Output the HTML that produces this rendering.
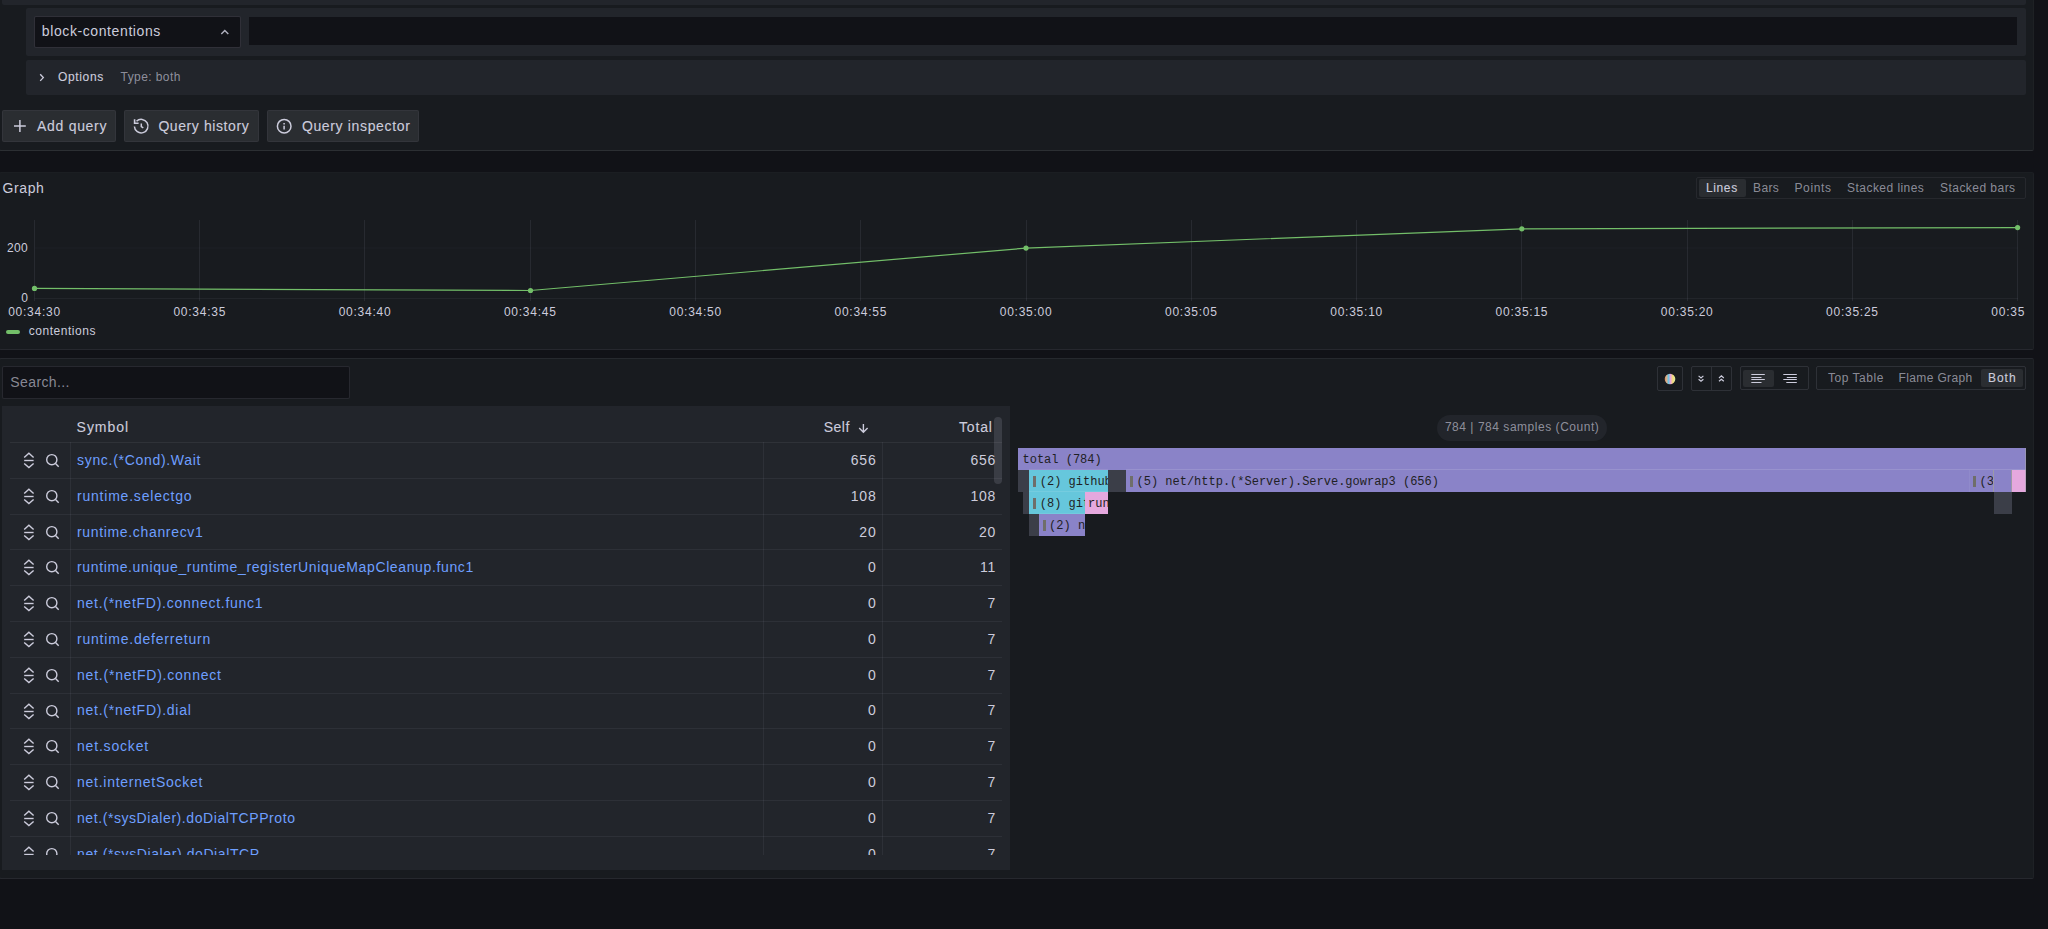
<!DOCTYPE html>
<html><head><meta charset="utf-8"><style>
html,body{margin:0;padding:0}
body{width:2048px;height:929px;overflow:hidden;background:#111217;position:relative;font-family:"Liberation Sans",sans-serif}
.b,.t,.m{position:absolute;box-sizing:border-box}
.t{white-space:nowrap}
.m{white-space:pre;font-family:"Liberation Mono",monospace;font-size:12px;line-height:14px;color:#1f1f24}
</style></head><body>
<div class="b" style="left:-1px;top:-10px;width:2035px;height:161px;background:#181b1f;border:1px solid rgba(204,204,220,0.08);border-radius:2px;border-right-color:rgba(204,204,220,0.035);border-bottom-color:rgba(204,204,220,0.11);"></div><div class="b" style="left:2px;top:-30px;width:2024px;height:34.5px;background:#22252b;border-radius:2px;"></div><div class="b" style="left:26px;top:8px;width:2000px;height:48px;background:#22252b;border-radius:2px;"></div><div class="b" style="left:34px;top:16px;width:207px;height:32px;background:#111217;border:1px solid rgba(204,204,220,0.17);border-radius:2px;"></div><div class="t" style="left:41.80px;top:24.35px;font-size:14px;line-height:14px;color:#ccccdc;letter-spacing:0.6px;">block-contentions</div><svg class="b" style="left:218px;top:26px" width="14" height="12"><polyline points="3.3,8 6.8,4.4 10.3,8" fill="none" stroke="rgba(204,204,220,0.85)" stroke-width="1.4"/></svg><div class="b" style="left:249px;top:16.5px;width:1768px;height:28.7px;background:#111217;"></div><div class="b" style="left:26px;top:60px;width:2000px;height:35px;background:#22252b;border-radius:2px;"></div><svg class="b" style="left:36px;top:70px" width="12" height="16"><polyline points="4.2,4.3 7.3,7.6 4.2,10.9" fill="none" stroke="#ccccdc" stroke-width="1.35"/></svg><div class="t" style="left:58.10px;top:70.64px;font-size:12px;line-height:12px;color:#ccccdc;letter-spacing:0.62px;-webkit-text-stroke:0.12px currentColor;">Options</div><div class="t" style="left:120.60px;top:70.64px;font-size:12px;line-height:12px;color:rgba(204,204,220,0.65);letter-spacing:0.41px;">Type: both</div><div class="b" style="left:2px;top:110px;width:114px;height:32px;background:rgba(204,204,220,0.10);border:1px solid rgba(204,204,220,0.06);border-radius:2px;"></div><div class="b" style="left:124px;top:110px;width:135px;height:32px;background:rgba(204,204,220,0.10);border:1px solid rgba(204,204,220,0.06);border-radius:2px;"></div><div class="b" style="left:267px;top:110px;width:152px;height:32px;background:rgba(204,204,220,0.10);border:1px solid rgba(204,204,220,0.06);border-radius:2px;"></div><svg class="b" style="left:10px;top:116px" width="20" height="20"><path d="M4 10 H15.8 M9.9 4.1 V15.9" stroke="#ccccdc" stroke-width="1.5" fill="none"/></svg><div class="t" style="left:37.10px;top:119.05px;font-size:14px;line-height:14px;color:#ccccdc;letter-spacing:0.69px;-webkit-text-stroke:0.12px currentColor;">Add query</div><svg class="b" style="left:131px;top:116px" width="20" height="20"><path d="M3.4 10.5 A6.8 6.8 0 1 0 5.5 5.2" stroke="#ccccdc" stroke-width="1.5" fill="none"/><polyline points="3.6,3.3 3.6,7.2 7.6,7.2" stroke="#ccccdc" stroke-width="1.6" fill="none"/><polyline points="10.3,7.6 10.3,10.6 12.3,11.8" stroke="#ccccdc" stroke-width="1.5" fill="none"/></svg><div class="t" style="left:158.40px;top:119.05px;font-size:14px;line-height:14px;color:#ccccdc;letter-spacing:0.59px;-webkit-text-stroke:0.12px currentColor;">Query history</div><svg class="b" style="left:274px;top:116px" width="20" height="20"><circle cx="10.2" cy="10.2" r="6.8" stroke="#ccccdc" stroke-width="1.5" fill="none"/><path d="M10.1 6.9 V8.4 M10.1 9.8 V13.6" stroke="#ccccdc" stroke-width="1.5" fill="none"/></svg><div class="t" style="left:301.90px;top:119.05px;font-size:14px;line-height:14px;color:#ccccdc;letter-spacing:0.65px;-webkit-text-stroke:0.12px currentColor;">Query inspector</div><div class="b" style="left:-1px;top:172px;width:2035px;height:178px;background:#181b1f;border:1px solid rgba(204,204,220,0.08);border-radius:2px;border-right-color:rgba(204,204,220,0.035);border-top-color:rgba(204,204,220,0.02);"></div><div class="t" style="left:2.60px;top:180.55px;font-size:14px;line-height:14px;color:#ccccdc;letter-spacing:0.6px;">Graph</div><div class="b" style="left:1696px;top:177px;width:330px;height:22px;border:1px solid rgba(204,204,220,0.08);border-radius:2px;"></div><div class="b" style="left:1699px;top:179px;width:47px;height:18px;background:rgba(204,204,220,0.10);border-radius:2px;"></div><div class="t" style="left:1706.00px;top:181.74px;font-size:12px;line-height:12px;color:#ccccdc;letter-spacing:0.62px;-webkit-text-stroke:0.12px currentColor;">Lines</div><div class="t" style="left:1753.00px;top:181.74px;font-size:12px;line-height:12px;color:rgba(204,204,220,0.65);letter-spacing:0.4px;">Bars</div><div class="t" style="left:1794.50px;top:181.74px;font-size:12px;line-height:12px;color:rgba(204,204,220,0.65);letter-spacing:0.62px;">Points</div><div class="t" style="left:1847.10px;top:181.74px;font-size:12px;line-height:12px;color:rgba(204,204,220,0.65);letter-spacing:0.45px;">Stacked lines</div><div class="t" style="left:1940.00px;top:181.74px;font-size:12px;line-height:12px;color:rgba(204,204,220,0.65);letter-spacing:0.46px;">Stacked bars</div><svg class="b" style="left:0;top:0" width="2048" height="929"><line x1="34.50" y1="220" x2="34.50" y2="301" stroke="rgba(204,204,220,0.09)" stroke-width="1"/><line x1="199.50" y1="220" x2="199.50" y2="301" stroke="rgba(204,204,220,0.09)" stroke-width="1"/><line x1="364.50" y1="220" x2="364.50" y2="301" stroke="rgba(204,204,220,0.09)" stroke-width="1"/><line x1="530.50" y1="220" x2="530.50" y2="301" stroke="rgba(204,204,220,0.09)" stroke-width="1"/><line x1="695.50" y1="220" x2="695.50" y2="301" stroke="rgba(204,204,220,0.09)" stroke-width="1"/><line x1="860.50" y1="220" x2="860.50" y2="301" stroke="rgba(204,204,220,0.09)" stroke-width="1"/><line x1="1026.50" y1="220" x2="1026.50" y2="301" stroke="rgba(204,204,220,0.09)" stroke-width="1"/><line x1="1191.50" y1="220" x2="1191.50" y2="301" stroke="rgba(204,204,220,0.09)" stroke-width="1"/><line x1="1356.50" y1="220" x2="1356.50" y2="301" stroke="rgba(204,204,220,0.09)" stroke-width="1"/><line x1="1521.50" y1="220" x2="1521.50" y2="301" stroke="rgba(204,204,220,0.09)" stroke-width="1"/><line x1="1687.50" y1="220" x2="1687.50" y2="301" stroke="rgba(204,204,220,0.09)" stroke-width="1"/><line x1="1852.50" y1="220" x2="1852.50" y2="301" stroke="rgba(204,204,220,0.09)" stroke-width="1"/><line x1="2017.50" y1="220" x2="2017.50" y2="301" stroke="rgba(204,204,220,0.09)" stroke-width="1"/><line x1="34.5" y1="248" x2="2018" y2="248" stroke="rgba(204,204,220,0.035)" stroke-width="1"/><line x1="34.5" y1="298.5" x2="2018" y2="298.5" stroke="rgba(204,204,220,0.06)" stroke-width="1"/><polyline points="34.5,288.4 530.5,290.5 1026,248.1 1521.8,228.8 2017.6,227.6" fill="none" stroke="#73bf69" stroke-width="1.2"/><circle cx="34.5" cy="288.4" r="2.6" fill="#73bf69"/><circle cx="530.5" cy="290.5" r="2.6" fill="#73bf69"/><circle cx="1026" cy="248.1" r="2.6" fill="#73bf69"/><circle cx="1521.8" cy="228.8" r="2.6" fill="#73bf69"/><circle cx="2017.6" cy="227.6" r="2.6" fill="#73bf69"/></svg><div class="t" style="right:2019.80px;top:241.84px;font-size:12px;line-height:12px;color:#ccccdc;text-align:right;letter-spacing:0.4px;">200</div><div class="t" style="right:2019.80px;top:291.84px;font-size:12px;line-height:12px;color:#ccccdc;text-align:right;letter-spacing:0.4px;">0</div><div class="t" style="left:-65.50px;width:200px;top:305.64px;font-size:12px;line-height:12px;color:#ccccdc;text-align:center;letter-spacing:0.75px;">00:34:30</div><div class="t" style="left:99.77px;width:200px;top:305.64px;font-size:12px;line-height:12px;color:#ccccdc;text-align:center;letter-spacing:0.75px;">00:34:35</div><div class="t" style="left:265.03px;width:200px;top:305.64px;font-size:12px;line-height:12px;color:#ccccdc;text-align:center;letter-spacing:0.75px;">00:34:40</div><div class="t" style="left:430.30px;width:200px;top:305.64px;font-size:12px;line-height:12px;color:#ccccdc;text-align:center;letter-spacing:0.75px;">00:34:45</div><div class="t" style="left:595.57px;width:200px;top:305.64px;font-size:12px;line-height:12px;color:#ccccdc;text-align:center;letter-spacing:0.75px;">00:34:50</div><div class="t" style="left:760.83px;width:200px;top:305.64px;font-size:12px;line-height:12px;color:#ccccdc;text-align:center;letter-spacing:0.75px;">00:34:55</div><div class="t" style="left:926.10px;width:200px;top:305.64px;font-size:12px;line-height:12px;color:#ccccdc;text-align:center;letter-spacing:0.75px;">00:35:00</div><div class="t" style="left:1091.37px;width:200px;top:305.64px;font-size:12px;line-height:12px;color:#ccccdc;text-align:center;letter-spacing:0.75px;">00:35:05</div><div class="t" style="left:1256.63px;width:200px;top:305.64px;font-size:12px;line-height:12px;color:#ccccdc;text-align:center;letter-spacing:0.75px;">00:35:10</div><div class="t" style="left:1421.90px;width:200px;top:305.64px;font-size:12px;line-height:12px;color:#ccccdc;text-align:center;letter-spacing:0.75px;">00:35:15</div><div class="t" style="left:1587.17px;width:200px;top:305.64px;font-size:12px;line-height:12px;color:#ccccdc;text-align:center;letter-spacing:0.75px;">00:35:20</div><div class="t" style="left:1752.43px;width:200px;top:305.64px;font-size:12px;line-height:12px;color:#ccccdc;text-align:center;letter-spacing:0.75px;">00:35:25</div><div class="b" style="left:1980px;top:300px;width:45px;height:24px;overflow:hidden"><div class="t" style="left:-62.30px;width:200px;top:5.64px;font-size:12px;line-height:12px;color:#ccccdc;text-align:center;letter-spacing:0.75px">00:35:30</div></div><div class="b" style="left:6px;top:330px;width:14px;height:4px;background:#73bf69;border-radius:2px;"></div><div class="t" style="left:28.70px;top:324.74px;font-size:12px;line-height:12px;color:#ccccdc;letter-spacing:0.54px;">contentions</div><div class="b" style="left:-1px;top:358px;width:2035px;height:521px;background:#181b1f;border:1px solid rgba(204,204,220,0.08);border-radius:2px;border-right-color:rgba(204,204,220,0.035);"></div><div class="b" style="left:2px;top:366px;width:348px;height:33px;background:#111217;border:1px solid rgba(204,204,220,0.12);border-radius:2px;"></div><div class="t" style="left:10.30px;top:375.45px;font-size:14px;line-height:14px;color:rgba(204,204,220,0.65);letter-spacing:0.39px;">Search...</div><div class="b" style="left:1657px;top:366px;width:26px;height:25px;border:1px solid rgba(204,204,220,0.13);border-radius:2px;"></div><svg class="b" style="left:1664px;top:373px" width="12" height="12"><defs><linearGradient id="cg" x1="0" x2="1" y1="0" y2="0"><stop offset="0" stop-color="#d88a55"/><stop offset="0.18" stop-color="#d6b090"/><stop offset="0.36" stop-color="#6fc3df"/><stop offset="0.55" stop-color="#e6a5dc"/><stop offset="0.76" stop-color="#f4dc78"/><stop offset="1" stop-color="#d8eca0"/></linearGradient></defs><circle cx="6" cy="6" r="5.3" fill="url(#cg)"/></svg><div class="b" style="left:1691px;top:366px;width:41px;height:25px;border:1px solid rgba(204,204,220,0.13);border-radius:2px;"></div><div class="b" style="left:1711px;top:367px;width:1px;height:23px;background:rgba(204,204,220,0.13);"></div><svg class="b" style="left:1695px;top:372px" width="32" height="14"><polyline points="3.6,3.9 6,6 8.4,3.9" fill="none" stroke="#ccccdc" stroke-width="1.2"/><polyline points="3.6,7.2 6,9.3 8.4,7.2" fill="none" stroke="#ccccdc" stroke-width="1.2"/><polyline points="24,6 26.4,3.9 28.8,6" fill="none" stroke="#ccccdc" stroke-width="1.2"/><polyline points="24,9.3 26.4,7.2 28.8,9.3" fill="none" stroke="#ccccdc" stroke-width="1.2"/></svg><div class="b" style="left:1740px;top:366px;width:69px;height:24px;border:1px solid rgba(204,204,220,0.13);border-radius:2px;"></div><div class="b" style="left:1742.5px;top:369.5px;width:31.5px;height:17px;background:rgba(204,204,220,0.10);border-radius:2px;"></div><svg class="b" style="left:1750px;top:372px" width="50" height="14"><path d="M1.3 2.5 H14.8 M1.3 5.5 H11.5 M1.3 7.5 H14.8 M1.3 10.5 H11.5" stroke="#ccccdc" stroke-width="1.1"/><path d="M33.3 2.5 H46.8 M36.8 5.5 H46.8 M33.3 7.5 H46.8 M36.3 10.5 H46.8" stroke="#ccccdc" stroke-width="1.1"/></svg><div class="b" style="left:1816px;top:366px;width:210px;height:24px;border:1px solid rgba(204,204,220,0.13);border-radius:2px;"></div><div class="b" style="left:1981px;top:369px;width:42px;height:18px;background:rgba(204,204,220,0.10);border-radius:2px;"></div><div class="t" style="left:1827.90px;top:372.34px;font-size:12px;line-height:12px;color:rgba(204,204,220,0.65);letter-spacing:0.55px;">Top Table</div><div class="t" style="left:1898.50px;top:372.34px;font-size:12px;line-height:12px;color:rgba(204,204,220,0.65);letter-spacing:0.37px;">Flame Graph</div><div class="t" style="left:1987.90px;top:372.34px;font-size:12px;line-height:12px;color:#ccccdc;letter-spacing:1.0px;-webkit-text-stroke:0.12px currentColor;">Both</div><div class="b" style="left:2px;top:406px;width:1008px;height:464px;background:#22252b;"></div><div class="t" style="left:76.60px;top:420.35px;font-size:14px;line-height:14px;color:#ccccdc;letter-spacing:0.95px;-webkit-text-stroke:0.12px currentColor;">Symbol</div><div class="t" style="left:823.70px;top:420.35px;font-size:14px;line-height:14px;color:#ccccdc;letter-spacing:0.5px;-webkit-text-stroke:0.12px currentColor;">Self</div><svg class="b" style="left:855px;top:420px" width="16" height="16"><path d="M8.4 4 V12.2 M4.2 8 L8.4 12.3 L12.6 8" stroke="#ccccdc" stroke-width="1.4" fill="none"/></svg><div class="t" style="left:959.00px;top:420.35px;font-size:14px;line-height:14px;color:#ccccdc;letter-spacing:0.85px;-webkit-text-stroke:0.12px currentColor;">Total</div><div class="b" style="left:2px;top:406px;width:1008px;height:449px;overflow:hidden"><div class="b" style="left:8px;top:36px;width:992px;height:1px;background:rgba(204,204,220,0.08)"></div><div class="b" style="left:8px;top:71.79px;width:992px;height:1px;background:rgba(204,204,220,0.07)"></div><svg class="b" style="left:18px;top:43.00px" width="44" height="22"><polyline points="4.2,8.6 8.9,4.2 13.6,8.6" fill="none" stroke="#ccccdc" stroke-width="1.4"/><path d="M4.2 11.5 H13.6" stroke="#ccccdc" stroke-width="1.4"/><polyline points="4.2,14.4 8.9,18.6 13.6,14.4" fill="none" stroke="#ccccdc" stroke-width="1.4"/><circle cx="31.8" cy="10.7" r="5.1" fill="none" stroke="#ccccdc" stroke-width="1.4"/><path d="M35.5 14.6 L38.7 17.8" stroke="#ccccdc" stroke-width="1.4"/></svg><div class="t" style="left:75px;top:46.95px;font-size:14px;line-height:14px;color:#6e9fff;letter-spacing:0.694px">sync.(&#42;Cond).Wait</div><div class="t" style="right:133.5px;top:46.95px;font-size:14px;line-height:14px;color:#ccccdc;text-align:right;letter-spacing:0.8px">656</div><div class="t" style="right:13.799999999999955px;top:46.95px;font-size:14px;line-height:14px;color:#ccccdc;text-align:right;letter-spacing:0.8px">656</div><div class="b" style="left:8px;top:107.58px;width:992px;height:1px;background:rgba(204,204,220,0.07)"></div><svg class="b" style="left:18px;top:78.79px" width="44" height="22"><polyline points="4.2,8.6 8.9,4.2 13.6,8.6" fill="none" stroke="#ccccdc" stroke-width="1.4"/><path d="M4.2 11.5 H13.6" stroke="#ccccdc" stroke-width="1.4"/><polyline points="4.2,14.4 8.9,18.6 13.6,14.4" fill="none" stroke="#ccccdc" stroke-width="1.4"/><circle cx="31.8" cy="10.7" r="5.1" fill="none" stroke="#ccccdc" stroke-width="1.4"/><path d="M35.5 14.6 L38.7 17.8" stroke="#ccccdc" stroke-width="1.4"/></svg><div class="t" style="left:75px;top:82.74px;font-size:14px;line-height:14px;color:#6e9fff;letter-spacing:0.787px">runtime.selectgo</div><div class="t" style="right:133.5px;top:82.74px;font-size:14px;line-height:14px;color:#ccccdc;text-align:right;letter-spacing:0.8px">108</div><div class="t" style="right:13.799999999999955px;top:82.74px;font-size:14px;line-height:14px;color:#ccccdc;text-align:right;letter-spacing:0.8px">108</div><div class="b" style="left:8px;top:143.37px;width:992px;height:1px;background:rgba(204,204,220,0.07)"></div><svg class="b" style="left:18px;top:114.58px" width="44" height="22"><polyline points="4.2,8.6 8.9,4.2 13.6,8.6" fill="none" stroke="#ccccdc" stroke-width="1.4"/><path d="M4.2 11.5 H13.6" stroke="#ccccdc" stroke-width="1.4"/><polyline points="4.2,14.4 8.9,18.6 13.6,14.4" fill="none" stroke="#ccccdc" stroke-width="1.4"/><circle cx="31.8" cy="10.7" r="5.1" fill="none" stroke="#ccccdc" stroke-width="1.4"/><path d="M35.5 14.6 L38.7 17.8" stroke="#ccccdc" stroke-width="1.4"/></svg><div class="t" style="left:75px;top:118.53px;font-size:14px;line-height:14px;color:#6e9fff;letter-spacing:0.662px">runtime.chanrecv1</div><div class="t" style="right:133.5px;top:118.53px;font-size:14px;line-height:14px;color:#ccccdc;text-align:right;letter-spacing:0.8px">20</div><div class="t" style="right:13.799999999999955px;top:118.53px;font-size:14px;line-height:14px;color:#ccccdc;text-align:right;letter-spacing:0.8px">20</div><div class="b" style="left:8px;top:179.16px;width:992px;height:1px;background:rgba(204,204,220,0.07)"></div><svg class="b" style="left:18px;top:150.37px" width="44" height="22"><polyline points="4.2,8.6 8.9,4.2 13.6,8.6" fill="none" stroke="#ccccdc" stroke-width="1.4"/><path d="M4.2 11.5 H13.6" stroke="#ccccdc" stroke-width="1.4"/><polyline points="4.2,14.4 8.9,18.6 13.6,14.4" fill="none" stroke="#ccccdc" stroke-width="1.4"/><circle cx="31.8" cy="10.7" r="5.1" fill="none" stroke="#ccccdc" stroke-width="1.4"/><path d="M35.5 14.6 L38.7 17.8" stroke="#ccccdc" stroke-width="1.4"/></svg><div class="t" style="left:75px;top:154.32px;font-size:14px;line-height:14px;color:#6e9fff;letter-spacing:0.631px">runtime.unique_runtime_registerUniqueMapCleanup.func1</div><div class="t" style="right:133.5px;top:154.32px;font-size:14px;line-height:14px;color:#ccccdc;text-align:right;letter-spacing:0.8px">0</div><div class="t" style="right:13.799999999999955px;top:154.32px;font-size:14px;line-height:14px;color:#ccccdc;text-align:right;letter-spacing:0.8px">11</div><div class="b" style="left:8px;top:214.95px;width:992px;height:1px;background:rgba(204,204,220,0.07)"></div><svg class="b" style="left:18px;top:186.16px" width="44" height="22"><polyline points="4.2,8.6 8.9,4.2 13.6,8.6" fill="none" stroke="#ccccdc" stroke-width="1.4"/><path d="M4.2 11.5 H13.6" stroke="#ccccdc" stroke-width="1.4"/><polyline points="4.2,14.4 8.9,18.6 13.6,14.4" fill="none" stroke="#ccccdc" stroke-width="1.4"/><circle cx="31.8" cy="10.7" r="5.1" fill="none" stroke="#ccccdc" stroke-width="1.4"/><path d="M35.5 14.6 L38.7 17.8" stroke="#ccccdc" stroke-width="1.4"/></svg><div class="t" style="left:75px;top:190.11px;font-size:14px;line-height:14px;color:#6e9fff;letter-spacing:0.732px">net.(&#42;netFD).connect.func1</div><div class="t" style="right:133.5px;top:190.11px;font-size:14px;line-height:14px;color:#ccccdc;text-align:right;letter-spacing:0.8px">0</div><div class="t" style="right:13.799999999999955px;top:190.11px;font-size:14px;line-height:14px;color:#ccccdc;text-align:right;letter-spacing:0.8px">7</div><div class="b" style="left:8px;top:250.74px;width:992px;height:1px;background:rgba(204,204,220,0.07)"></div><svg class="b" style="left:18px;top:221.95px" width="44" height="22"><polyline points="4.2,8.6 8.9,4.2 13.6,8.6" fill="none" stroke="#ccccdc" stroke-width="1.4"/><path d="M4.2 11.5 H13.6" stroke="#ccccdc" stroke-width="1.4"/><polyline points="4.2,14.4 8.9,18.6 13.6,14.4" fill="none" stroke="#ccccdc" stroke-width="1.4"/><circle cx="31.8" cy="10.7" r="5.1" fill="none" stroke="#ccccdc" stroke-width="1.4"/><path d="M35.5 14.6 L38.7 17.8" stroke="#ccccdc" stroke-width="1.4"/></svg><div class="t" style="left:75px;top:225.90px;font-size:14px;line-height:14px;color:#6e9fff;letter-spacing:0.789px">runtime.deferreturn</div><div class="t" style="right:133.5px;top:225.90px;font-size:14px;line-height:14px;color:#ccccdc;text-align:right;letter-spacing:0.8px">0</div><div class="t" style="right:13.799999999999955px;top:225.90px;font-size:14px;line-height:14px;color:#ccccdc;text-align:right;letter-spacing:0.8px">7</div><div class="b" style="left:8px;top:286.53px;width:992px;height:1px;background:rgba(204,204,220,0.07)"></div><svg class="b" style="left:18px;top:257.74px" width="44" height="22"><polyline points="4.2,8.6 8.9,4.2 13.6,8.6" fill="none" stroke="#ccccdc" stroke-width="1.4"/><path d="M4.2 11.5 H13.6" stroke="#ccccdc" stroke-width="1.4"/><polyline points="4.2,14.4 8.9,18.6 13.6,14.4" fill="none" stroke="#ccccdc" stroke-width="1.4"/><circle cx="31.8" cy="10.7" r="5.1" fill="none" stroke="#ccccdc" stroke-width="1.4"/><path d="M35.5 14.6 L38.7 17.8" stroke="#ccccdc" stroke-width="1.4"/></svg><div class="t" style="left:75px;top:261.69px;font-size:14px;line-height:14px;color:#6e9fff;letter-spacing:0.779px">net.(&#42;netFD).connect</div><div class="t" style="right:133.5px;top:261.69px;font-size:14px;line-height:14px;color:#ccccdc;text-align:right;letter-spacing:0.8px">0</div><div class="t" style="right:13.799999999999955px;top:261.69px;font-size:14px;line-height:14px;color:#ccccdc;text-align:right;letter-spacing:0.8px">7</div><div class="b" style="left:8px;top:322.32px;width:992px;height:1px;background:rgba(204,204,220,0.07)"></div><svg class="b" style="left:18px;top:293.53px" width="44" height="22"><polyline points="4.2,8.6 8.9,4.2 13.6,8.6" fill="none" stroke="#ccccdc" stroke-width="1.4"/><path d="M4.2 11.5 H13.6" stroke="#ccccdc" stroke-width="1.4"/><polyline points="4.2,14.4 8.9,18.6 13.6,14.4" fill="none" stroke="#ccccdc" stroke-width="1.4"/><circle cx="31.8" cy="10.7" r="5.1" fill="none" stroke="#ccccdc" stroke-width="1.4"/><path d="M35.5 14.6 L38.7 17.8" stroke="#ccccdc" stroke-width="1.4"/></svg><div class="t" style="left:75px;top:297.48px;font-size:14px;line-height:14px;color:#6e9fff;letter-spacing:0.744px">net.(&#42;netFD).dial</div><div class="t" style="right:133.5px;top:297.48px;font-size:14px;line-height:14px;color:#ccccdc;text-align:right;letter-spacing:0.8px">0</div><div class="t" style="right:13.799999999999955px;top:297.48px;font-size:14px;line-height:14px;color:#ccccdc;text-align:right;letter-spacing:0.8px">7</div><div class="b" style="left:8px;top:358.11px;width:992px;height:1px;background:rgba(204,204,220,0.07)"></div><svg class="b" style="left:18px;top:329.32px" width="44" height="22"><polyline points="4.2,8.6 8.9,4.2 13.6,8.6" fill="none" stroke="#ccccdc" stroke-width="1.4"/><path d="M4.2 11.5 H13.6" stroke="#ccccdc" stroke-width="1.4"/><polyline points="4.2,14.4 8.9,18.6 13.6,14.4" fill="none" stroke="#ccccdc" stroke-width="1.4"/><circle cx="31.8" cy="10.7" r="5.1" fill="none" stroke="#ccccdc" stroke-width="1.4"/><path d="M35.5 14.6 L38.7 17.8" stroke="#ccccdc" stroke-width="1.4"/></svg><div class="t" style="left:75px;top:333.27px;font-size:14px;line-height:14px;color:#6e9fff;letter-spacing:0.811px">net.socket</div><div class="t" style="right:133.5px;top:333.27px;font-size:14px;line-height:14px;color:#ccccdc;text-align:right;letter-spacing:0.8px">0</div><div class="t" style="right:13.799999999999955px;top:333.27px;font-size:14px;line-height:14px;color:#ccccdc;text-align:right;letter-spacing:0.8px">7</div><div class="b" style="left:8px;top:393.90px;width:992px;height:1px;background:rgba(204,204,220,0.07)"></div><svg class="b" style="left:18px;top:365.11px" width="44" height="22"><polyline points="4.2,8.6 8.9,4.2 13.6,8.6" fill="none" stroke="#ccccdc" stroke-width="1.4"/><path d="M4.2 11.5 H13.6" stroke="#ccccdc" stroke-width="1.4"/><polyline points="4.2,14.4 8.9,18.6 13.6,14.4" fill="none" stroke="#ccccdc" stroke-width="1.4"/><circle cx="31.8" cy="10.7" r="5.1" fill="none" stroke="#ccccdc" stroke-width="1.4"/><path d="M35.5 14.6 L38.7 17.8" stroke="#ccccdc" stroke-width="1.4"/></svg><div class="t" style="left:75px;top:369.06px;font-size:14px;line-height:14px;color:#6e9fff;letter-spacing:0.741px">net.internetSocket</div><div class="t" style="right:133.5px;top:369.06px;font-size:14px;line-height:14px;color:#ccccdc;text-align:right;letter-spacing:0.8px">0</div><div class="t" style="right:13.799999999999955px;top:369.06px;font-size:14px;line-height:14px;color:#ccccdc;text-align:right;letter-spacing:0.8px">7</div><div class="b" style="left:8px;top:429.69px;width:992px;height:1px;background:rgba(204,204,220,0.07)"></div><svg class="b" style="left:18px;top:400.90px" width="44" height="22"><polyline points="4.2,8.6 8.9,4.2 13.6,8.6" fill="none" stroke="#ccccdc" stroke-width="1.4"/><path d="M4.2 11.5 H13.6" stroke="#ccccdc" stroke-width="1.4"/><polyline points="4.2,14.4 8.9,18.6 13.6,14.4" fill="none" stroke="#ccccdc" stroke-width="1.4"/><circle cx="31.8" cy="10.7" r="5.1" fill="none" stroke="#ccccdc" stroke-width="1.4"/><path d="M35.5 14.6 L38.7 17.8" stroke="#ccccdc" stroke-width="1.4"/></svg><div class="t" style="left:75px;top:404.85px;font-size:14px;line-height:14px;color:#6e9fff;letter-spacing:0.573px">net.(&#42;sysDialer).doDialTCPProto</div><div class="t" style="right:133.5px;top:404.85px;font-size:14px;line-height:14px;color:#ccccdc;text-align:right;letter-spacing:0.8px">0</div><div class="t" style="right:13.799999999999955px;top:404.85px;font-size:14px;line-height:14px;color:#ccccdc;text-align:right;letter-spacing:0.8px">7</div><div class="b" style="left:8px;top:465.48px;width:992px;height:1px;background:rgba(204,204,220,0.07)"></div><svg class="b" style="left:18px;top:436.69px" width="44" height="22"><polyline points="4.2,8.6 8.9,4.2 13.6,8.6" fill="none" stroke="#ccccdc" stroke-width="1.4"/><path d="M4.2 11.5 H13.6" stroke="#ccccdc" stroke-width="1.4"/><polyline points="4.2,14.4 8.9,18.6 13.6,14.4" fill="none" stroke="#ccccdc" stroke-width="1.4"/><circle cx="31.8" cy="10.7" r="5.1" fill="none" stroke="#ccccdc" stroke-width="1.4"/><path d="M35.5 14.6 L38.7 17.8" stroke="#ccccdc" stroke-width="1.4"/></svg><div class="t" style="left:75px;top:440.64px;font-size:14px;line-height:14px;color:#6e9fff;letter-spacing:0.592px">net.(&#42;sysDialer).doDialTCP</div><div class="t" style="right:133.5px;top:440.64px;font-size:14px;line-height:14px;color:#ccccdc;text-align:right;letter-spacing:0.8px">0</div><div class="t" style="right:13.799999999999955px;top:440.64px;font-size:14px;line-height:14px;color:#ccccdc;text-align:right;letter-spacing:0.8px">7</div><div class="b" style="left:68px;top:36px;width:1px;height:460px;background:rgba(204,204,220,0.07)"></div><div class="b" style="left:761px;top:36px;width:1px;height:460px;background:rgba(204,204,220,0.07)"></div><div class="b" style="left:880px;top:36px;width:1px;height:460px;background:rgba(204,204,220,0.07)"></div></div><div class="b" style="left:994.2px;top:417px;width:7.6px;height:66.5px;background:rgba(204,204,220,0.15);border-radius:4px;"></div><div class="b" style="left:1436.5px;top:414.5px;width:170.5px;height:26px;background:#22252b;border-radius:13px;"></div><div class="t" style="left:1444.90px;top:420.64px;font-size:12px;line-height:12px;color:rgba(204,204,220,0.65);letter-spacing:0.53px;">784 | 784 samples (Count)</div><div class="b" style="left:1018px;top:448px;width:1008px;height:21.5px;background:#8a83c8;overflow:hidden"></div><div class="m" style="left:1022.5px;top:453px;">total (784)</div><div class="b" style="left:1018px;top:469.5px;width:11.3px;height:22px;background:#3b3e48;overflow:hidden"></div><div class="b" style="left:1029.3px;top:469.5px;width:78.6px;height:22px;background:#66c7dc;overflow:hidden"></div><div class="b" style="left:1107.9px;top:469.5px;width:18px;height:22px;background:#3b3e48;overflow:hidden"></div><div class="b" style="left:1126px;top:469.5px;width:843px;height:22px;background:#8a83c8;overflow:hidden"></div><div class="b" style="left:1969px;top:469.5px;width:24.3px;height:22px;background:#8a83c8;overflow:hidden"></div><div class="b" style="left:1993.3px;top:469.5px;width:18.4px;height:22px;background:#8a83c8;overflow:hidden"></div><div class="b" style="left:2011.7px;top:469.5px;width:14.3px;height:22px;background:#e5a8de;overflow:hidden"></div><div class="b" style="left:1023px;top:491.5px;width:6.3px;height:22px;background:#3b3e48;overflow:hidden"></div><div class="b" style="left:1029.3px;top:491.5px;width:55.3px;height:22px;background:#66c7dc;overflow:hidden"></div><div class="b" style="left:1084.6px;top:491.5px;width:23.3px;height:22px;background:#e5a8de;overflow:hidden"></div><div class="b" style="left:1993.8px;top:491.5px;width:17.9px;height:22px;background:#3b3e48;overflow:hidden"></div><div class="b" style="left:1029.3px;top:513.5px;width:9.3px;height:22px;background:#3b3e48;overflow:hidden"></div><div class="b" style="left:1038.6px;top:513.5px;width:46px;height:22px;background:#8a83c8;overflow:hidden"></div><div class="b" style="left:1029.3px;top:469.5px;width:78.6px;height:22px;overflow:hidden"><div class="b" style="left:4px;top:6px;width:3px;height:11px;background:#6f6e6a"></div><div class="m" style="left:10.5px;top:5px">(2) github.com/...</div></div><div class="b" style="left:1126px;top:469.5px;width:843px;height:22px;overflow:hidden"><div class="b" style="left:4px;top:6px;width:3px;height:11px;background:#6f6e6a"></div><div class="m" style="left:10.5px;top:5px">(5) net/http.(*Server).Serve.gowrap3 (656)</div></div><div class="b" style="left:1969px;top:469.5px;width:24.3px;height:22px;overflow:hidden"><div class="b" style="left:4px;top:6px;width:3px;height:11px;background:#6f6e6a"></div><div class="m" style="left:10.5px;top:5px">(3) ...</div></div><div class="b" style="left:1029.3px;top:491.5px;width:55.3px;height:22px;overflow:hidden"><div class="b" style="left:4px;top:6px;width:3px;height:11px;background:#6f6e6a"></div><div class="m" style="left:10.5px;top:5px">(8) github.com</div></div><div class="b" style="left:1084.6px;top:491.5px;width:23.3px;height:22px;overflow:hidden"><div class="m" style="left:3.5px;top:5px">runtime</div></div><div class="b" style="left:1038.6px;top:513.5px;width:46px;height:22px;overflow:hidden"><div class="b" style="left:4px;top:6px;width:3px;height:11px;background:#6f6e6a"></div><div class="m" style="left:10.5px;top:5px">(2) net.</div></div><div class="b" style="left:1126px;top:469px;width:900px;height:1px;background:rgba(255,255,255,0.12)"></div><div class="b" style="left:1029.3px;top:469px;width:78.6px;height:1px;background:rgba(255,255,255,0.10)"></div><div class="b" style="left:1029.3px;top:491px;width:78.6px;height:1px;background:rgba(255,255,255,0.10)"></div><div class="b" style="left:1038.6px;top:513px;width:46px;height:1px;background:rgba(255,255,255,0.08)"></div><div class="b" style="left:1968.5px;top:469.5px;width:1px;height:22px;background:rgba(255,255,255,0.06)"></div><div class="b" style="left:1993px;top:469.5px;width:1px;height:22px;background:#9c9aa6"></div><div class="b" style="left:2011px;top:469.5px;width:1px;height:22px;background:#9c9aa6"></div><div class="b" style="left:2025px;top:448px;width:1px;height:43.5px;background:rgba(160,160,170,0.6)"></div>
</body></html>
